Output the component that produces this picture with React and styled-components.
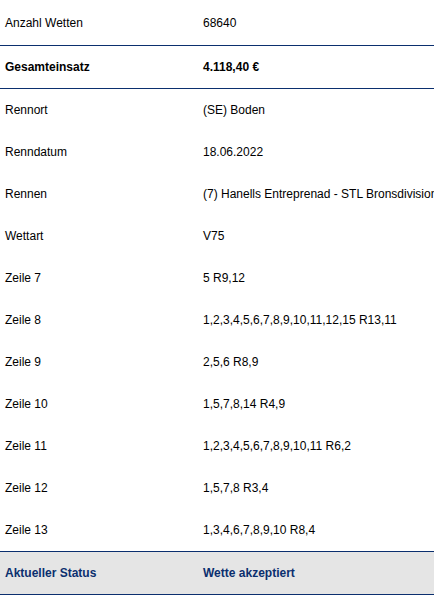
import React from "react";
import styled, { createGlobalStyle } from "styled-components";

const Global = createGlobalStyle`
  html, body { margin: 0; padding: 0; background: #fff; overflow: hidden; }
  body { font-family: "Liberation Sans", Arial, sans-serif; }
`;

const Table = styled.div`
  display: flex;
  flex-direction: column;
  width: 434px;
  overflow: hidden;
`;

const Row = styled.div`
  display: grid;
  grid-template-columns: 198px 1fr;
  align-items: center;
  height: ${(p) => p.$h || 42}px;
  padding-left: 5px;
  font-size: 12px;
  line-height: 14px;
  color: ${(p) => (p.$status ? "#0b2f6e" : "#000")};
  font-weight: ${(p) => (p.$bold ? 700 : 400)};
  background: ${(p) => (p.$status ? "#e5e5e5" : "transparent")};
`;

const Divider = styled.div`
  height: 1px;
  background: #0b2f6e;
`;

const Cell = styled.div`
  white-space: nowrap;
`;

const rows = [
  ["Rennort", "(SE) Boden"],
  ["Renndatum", "18.06.2022"],
  ["Rennen", "(7) Hanells Entreprenad - STL Bronsdivisionen"],
  ["Wettart", "V75"],
  ["Zeile 7", "5 R9,12"],
  ["Zeile 8", "1,2,3,4,5,6,7,8,9,10,11,12,15 R13,11"],
  ["Zeile 9", "2,5,6 R8,9"],
  ["Zeile 10", "1,5,7,8,14 R4,9"],
  ["Zeile 11", "1,2,3,4,5,6,7,8,9,10,11 R6,2"],
  ["Zeile 12", "1,5,7,8 R3,4"],
  ["Zeile 13", "1,3,4,6,7,8,9,10 R8,4"],
];

export default function App() {
  return (
    <>
      <Global />
      <Table>
        <Row $h={45}>
          <Cell>Anzahl Wetten</Cell>
          <Cell>68640</Cell>
        </Row>
        <Divider />
        <Row $bold>
          <Cell>Gesamteinsatz</Cell>
          <Cell>4.118,40 €</Cell>
        </Row>
        <Divider />
        {rows.map(([l, v]) => (
          <Row key={l}>
            <Cell>{l}</Cell>
            <Cell>{v}</Cell>
          </Row>
        ))}
        <Divider />
        <Row $bold $status>
          <Cell>Aktueller Status</Cell>
          <Cell>Wette akzeptiert</Cell>
        </Row>
        <Divider />
      </Table>
    </>
  );
}
